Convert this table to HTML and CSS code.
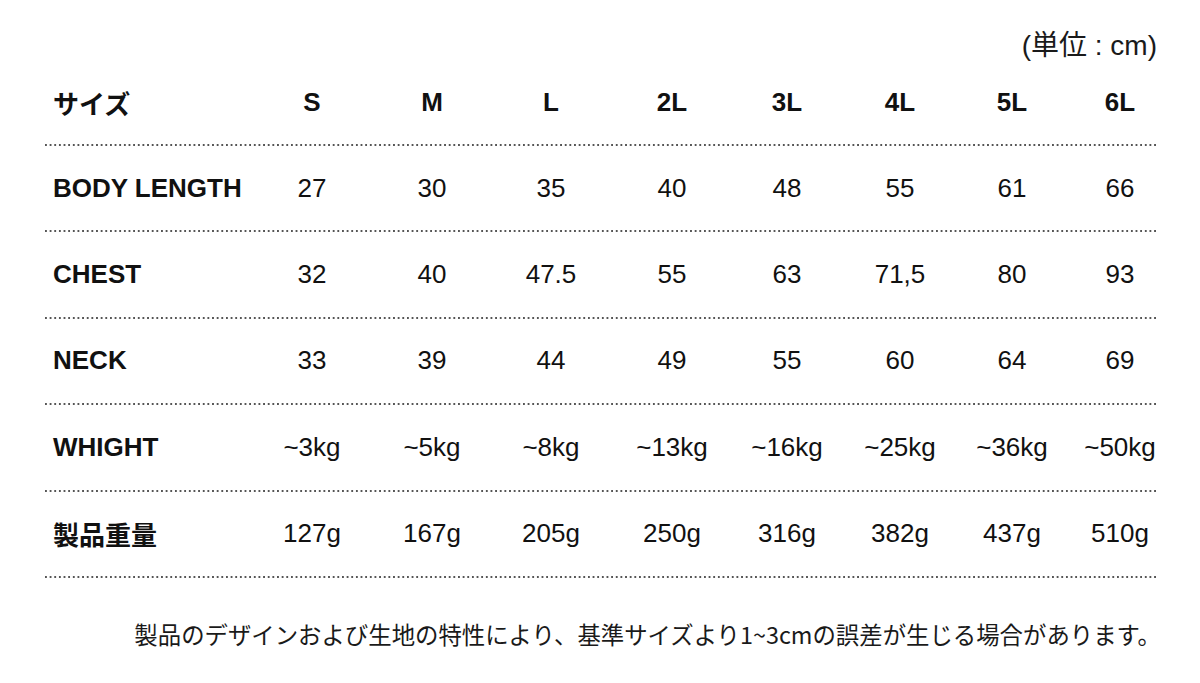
FILE: index.html
```html
<!DOCTYPE html>
<html lang="ja">
<head>
<meta charset="utf-8">
<link rel="stylesheet" href="styles.css">
</head>
<body>
<div class="sheet">
  <div class="unit">(単位 : cm)</div>
  <div class="table">
    <div class="row head">
      <div class="label">サイズ</div>
      <div>S</div><div>M</div><div>L</div><div>2L</div><div>3L</div><div>4L</div><div>5L</div><div>6L</div>
    </div>
    <div class="row">
      <div class="label">BODY LENGTH</div>
      <div>27</div><div>30</div><div>35</div><div>40</div><div>48</div><div>55</div><div>61</div><div>66</div>
    </div>
    <div class="row">
      <div class="label">CHEST</div>
      <div>32</div><div>40</div><div>47.5</div><div>55</div><div>63</div><div>71,5</div><div>80</div><div>93</div>
    </div>
    <div class="row">
      <div class="label">NECK</div>
      <div>33</div><div>39</div><div>44</div><div>49</div><div>55</div><div>60</div><div>64</div><div>69</div>
    </div>
    <div class="row">
      <div class="label">WHIGHT</div>
      <div>~3kg</div><div>~5kg</div><div>~8kg</div><div>~13kg</div><div>~16kg</div><div>~25kg</div><div>~36kg</div><div>~50kg</div>
    </div>
    <div class="row">
      <div class="label">製品重量</div>
      <div>127g</div><div>167g</div><div>205g</div><div>250g</div><div>316g</div><div>382g</div><div>437g</div><div>510g</div>
    </div>
  </div>
  <p class="note">製品のデザインおよび生地の特性により、基準サイズより1~3cmの誤差が生じる場合があります。</p>
</div>
</body>
</html>
```

FILE: styles.css
```css
html, body {
  margin: 0;
  padding: 0;
  background: #ffffff;
}

body {
  width: 1200px;
  height: 683px;
  overflow: hidden;
  font-family: "Liberation Sans", "Noto Sans CJK JP", sans-serif;
  color: #111111;
}

.sheet {
  padding: 0 43px 0 45px;
}

.unit {
  box-sizing: border-box;
  height: 60px;
  padding-top: 30px;
  line-height: 32px;
  text-align: right;
  font-size: 28px;
  color: #1a1a1a;
}

.table {
  display: flex;
  flex-direction: column;
}

.row {
  display: grid;
  grid-template-columns: 207px 120px 120px 118px 124px 106px 120px 104px 112px;
  align-items: center;
  height: 86.4px;
  font-size: 26px;
  background-image: linear-gradient(to right, #555555 0, #555555 2px, transparent 2px);
  background-size: 4.65px 2px;
  background-repeat: repeat-x;
  background-position: 0 100%;
}

.row.head {
  height: 86px;
  font-weight: bold;
}

.row > div {
  text-align: center;
  white-space: nowrap;
  padding-bottom: 2px;
}

.row > .label {
  text-align: left;
  padding-left: 8px;
  font-weight: bold;
}

.note {
  margin: 39px -4px 0 0;
  text-align: right;
  font-family: "Noto Sans CJK JP", sans-serif;
  font-size: 23.4px;
  color: #1a1a1a;
  white-space: nowrap;
}
```
